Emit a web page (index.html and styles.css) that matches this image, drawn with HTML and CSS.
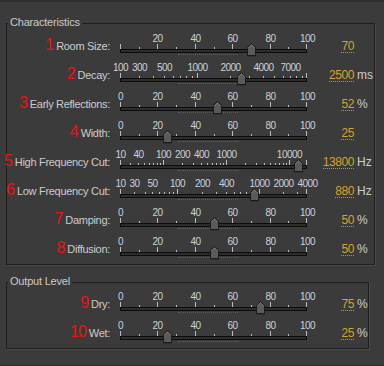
FILE: index.html
```html
<!DOCTYPE html>
<html>
<head>
<meta charset="utf-8">
<link rel="stylesheet" href="styles.css">
</head>
<body>
<div class="panel">
  <fieldset class="group main">
    <legend>Characteristics</legend>
    <div class="row">
      <div class="label"><span class="num">1</span>Room Size:</div>
      <div class="slider"><div class="scale" data-scale="lin" data-value="70" data-labels="20,40,60,80,100"><div class="track"></div></div></div>
      <div class="value"><span class="val">70</span></div>
      <div class="unit"></div>
    </div>
    <div class="row">
      <div class="label"><span class="num">2</span>Decay:</div>
      <div class="slider"><div class="scale" data-scale="decay" data-value="2500" data-labels="100@200,300,500,1000,2000,4000,7000"><div class="track"></div></div></div>
      <div class="value"><span class="val">2500</span></div>
      <div class="unit">ms</div>
    </div>
    <div class="row">
      <div class="label"><span class="num">3</span>Early Reflections:</div>
      <div class="slider"><div class="scale" data-scale="lin" data-value="52" data-labels="0,20,40,60,80,100"><div class="track"></div></div></div>
      <div class="value"><span class="val">52</span></div>
      <div class="unit">%</div>
    </div>
    <div class="row">
      <div class="label"><span class="num">4</span>Width:</div>
      <div class="slider"><div class="scale" data-scale="lin" data-value="25" data-labels="0,20,40,60,80,100"><div class="track"></div></div></div>
      <div class="value"><span class="val">25</span></div>
      <div class="unit"></div>
    </div>
    <div class="row">
      <div class="label"><span class="num">5</span>High Frequency Cut:</div>
      <div class="slider"><div class="scale" data-scale="hfc" data-value="13800" data-labels="10@20,40,100,200,400,1000,10000"><div class="track"></div></div></div>
      <div class="value"><span class="val">13800</span></div>
      <div class="unit">Hz</div>
    </div>
    <div class="row">
      <div class="label"><span class="num">6</span>Low Frequency Cut:</div>
      <div class="slider"><div class="scale" data-scale="lfc" data-value="880" data-labels="10@20,30,50,100,200,400,1000,2000,4000"><div class="track"></div></div></div>
      <div class="value"><span class="val">880</span></div>
      <div class="unit">Hz</div>
    </div>
    <div class="row">
      <div class="label"><span class="num">7</span>Damping:</div>
      <div class="slider"><div class="scale" data-scale="lin" data-value="50" data-labels="0,20,40,60,80,100"><div class="track"></div></div></div>
      <div class="value"><span class="val">50</span></div>
      <div class="unit">%</div>
    </div>
    <div class="row">
      <div class="label"><span class="num">8</span>Diffusion:</div>
      <div class="slider"><div class="scale" data-scale="lin" data-value="50" data-labels="0,20,40,60,80,100"><div class="track"></div></div></div>
      <div class="value"><span class="val">50</span></div>
      <div class="unit">%</div>
    </div>
  </fieldset>
  <fieldset class="group out">
    <legend>Output Level</legend>
    <div class="row">
      <div class="label"><span class="num">9</span>Dry:</div>
      <div class="slider"><div class="scale" data-scale="lin" data-value="75" data-labels="0,20,40,60,80,100"><div class="track"></div></div></div>
      <div class="value"><span class="val">75</span></div>
      <div class="unit">%</div>
    </div>
    <div class="row">
      <div class="label"><span class="num">10</span>Wet:</div>
      <div class="slider"><div class="scale" data-scale="lin" data-value="25" data-labels="0,20,40,60,80,100"><div class="track"></div></div></div>
      <div class="value"><span class="val">25</span></div>
      <div class="unit">%</div>
    </div>
  </fieldset>
</div>
<script src="script.js"></script>
</body>
</html>
```
FILE: styles.css
```css
* { box-sizing: border-box; }
html, body { margin: 0; padding: 0; }
body {
  width: 384px;
  height: 366px;
  overflow: hidden;
  background: #3b3b3b;
  font-family: "Liberation Sans", Arial, sans-serif;
}
.panel {
  height: 366px;
  border-top: 2px solid #2e2e2e;
  border-bottom: 1px solid #2a2a2a;
  padding-top: 14px;
}
.group {
  margin: 0 0 0 6px;
  padding: 1px 0 0 0;
  border: 1px solid #1f1f1f;
  box-shadow: 1px 1px 0 #4a4a4a;
  min-width: 0;
}
.group.main { width: 369px; }
.group.out { width: 363px; margin-top: 10px; padding-top: 0; }
legend {
  margin-left: 1px;
  padding: 0 2px 2px;
  font-size: 11px;
  line-height: 13px;
  color: #cacaca;
  letter-spacing: -0.2px;
}
.row {
  display: grid;
  grid-template-columns: 103px 208px 36px 1fr;
  height: 29px;
}
.label {
  display: flex;
  justify-content: flex-end;
  align-items: baseline;
  white-space: nowrap;
  font-size: 11px;
  line-height: 29px;
  letter-spacing: -0.3px;
  color: #cccccc;
}
.num {
  font-size: 16px;
  line-height: 20px;
  color: #f01010;
  letter-spacing: -1px;
  margin-right: 3px;
}
.slider { padding-left: 10px; }
.scale {
  position: relative;
  width: 187px;
  height: 29px;
  padding-top: 17px;
}
.track {
  height: 4px;
  background: #2c2c2c;
  border: 1px solid #0c0c0c;
}
.tick {
  position: absolute;
  top: 15px;
  width: 1px;
  height: 2px;
  background: #bcbcbc;
}
.tick.major { top: 12px; height: 5px; }
.tl {
  position: absolute;
  top: 2px;
  font-size: 10px;
  line-height: 10px;
  color: #ccd2d8;
  letter-spacing: -0.5px;
  white-space: nowrap;
  transform: translateX(-50%);
}
.shade {
  position: absolute;
  top: 22px;
  left: 58px;
  width: 60px;
  border-top: 1px dotted #5c5c5c;
}
.thumb {
  position: absolute;
  top: 11px;
  width: 9px;
  height: 14px;
}
.thumb svg { display: block; }
.value {
  text-align: right;
  font-size: 12px;
  line-height: 29px;
}
.val {
  display: inline-block;
  line-height: 11px;
  color: #d9a12a;
  letter-spacing: -0.4px;
  border-bottom: 1px dotted #c8941e;
}
.unit {
  padding-left: 3px;
  font-size: 12px;
  line-height: 29px;
  color: #cccccc;
  white-space: nowrap;
}
```
FILE: script.js
```js
(function () {
  var L = Math.log10;
  function logTicks(from, to) {
    var out = [];
    for (var d = 1; d <= 100000; d *= 10) {
      for (var m = 1; m < 10; m++) {
        var v = m * d;
        if (v >= from && v <= to) out.push(v);
      }
    }
    return out;
  }
  var lin = [];
  for (var i = 0; i <= 100; i += 10) lin.push(i);
  var scales = {
    lin: { p: function (v) { return v * 1.87; }, ticks: lin, major: [0, 20, 40, 60, 80, 100] },
    decay: { p: function (v) { return 77 + 110 * L(v / 1000); }, ticks: logTicks(200, 10000), major: [200, 1000, 10000] },
    hfc: { p: function (v) { return 43 + 63 * L(v / 100); }, ticks: logTicks(20, 20000), major: [20, 100, 1000, 10000, 20000] },
    lfc: { p: function (v) { return 57 + 81.5 * L(v / 100); }, ticks: logTicks(20, 4000), major: [20, 100, 1000, 4000] }
  };
  function pos(s, v) {
    var p = s.p(v);
    if (p < 0) p = 0;
    if (p > 187) p = 187;
    return p;
  }
  var thumbSvg = '<svg width="9" height="14" viewBox="0 0 9 14">' +
    '<polygon points="0.5,4.5 4.5,0.5 8.5,4.5 8.5,13.5 0.5,13.5" fill="#262626"/>' +
    '<polygon points="0.5,4.5 4.5,0.5 8.5,4.5 8.5,12.5 0.5,12.5" fill="#5a5a5a" stroke="#1a1a1a" stroke-width="1"/>' +
    '<polyline points="1.5,5 4.5,2 7.5,5" fill="none" stroke="#777" stroke-width="1"/>' +
    '</svg>';
  document.querySelectorAll('.scale').forEach(function (el) {
    var s = scales[el.dataset.scale];
    var frag = document.createDocumentFragment();
    s.ticks.forEach(function (v) {
      var t = document.createElement('div');
      t.className = 'tick' + (s.major.indexOf(v) >= 0 ? ' major' : '');
      t.style.left = Math.min(186, Math.round(pos(s, v))) + 'px';
      frag.appendChild(t);
    });
    el.dataset.labels.split(',').forEach(function (item) {
      var parts = item.split('@');
      var text = parts[0];
      var v = parseFloat(parts[1] || parts[0]);
      var l = document.createElement('div');
      l.className = 'tl';
      l.textContent = text;
      l.style.left = (Math.round(pos(s, v)) + 0.5) + 'px';
      frag.appendChild(l);
    });
    var sh = document.createElement('div');
    sh.className = 'shade';
    frag.appendChild(sh);
    var th = document.createElement('div');
    th.className = 'thumb';
    th.innerHTML = thumbSvg;
    th.style.left = (Math.round(pos(s, parseFloat(el.dataset.value))) - 4) + 'px';
    frag.appendChild(th);
    el.appendChild(frag);
  });
})();
```
